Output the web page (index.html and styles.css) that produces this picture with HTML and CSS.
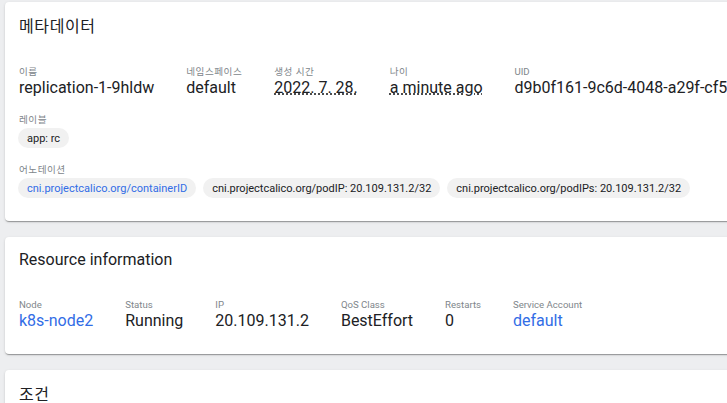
FILE: index.html
```html
<!DOCTYPE html>
<html lang="ko">
<head>
<meta charset="utf-8">
<link rel="stylesheet" href="styles.css">
</head>
<body>
<div class="page">
  <section class="card">
    <h2 class="title title-ko">메타데이터</h2>
    <div class="props">
      <div class="prop"><div class="label label-ko">이름</div><div class="value">replication-1-9hldw</div></div>
      <div class="prop"><div class="label label-ko">네임스페이스</div><div class="value">default</div></div>
      <div class="prop"><div class="label label-ko">생성 시간</div><div class="value dotted">2022. 7. 28.</div></div>
      <div class="prop"><div class="label label-ko">나이</div><div class="value dotted">a minute ago</div></div>
      <div class="prop"><div class="label">UID</div><div class="value">d9b0f161-9c6d-4048-a29f-cf5e2b7a1c3d</div></div>
    </div>
    <div class="group">
      <div class="label label-ko">레이블</div>
      <div class="chips">
        <span class="chip">app: rc</span>
      </div>
    </div>
    <div class="group">
      <div class="label label-ko">어노테이션</div>
      <div class="chips">
        <span class="chip chip-link">cni.projectcalico.org/containerID</span>
        <span class="chip">cni.projectcalico.org/podIP: 20.109.131.2/32</span>
        <span class="chip">cni.projectcalico.org/podIPs: 20.109.131.2/32</span>
      </div>
    </div>
  </section>

  <section class="card">
    <h2 class="title">Resource information</h2>
    <div class="props">
      <div class="prop"><div class="label">Node</div><div class="value link">k8s-node2</div></div>
      <div class="prop"><div class="label">Status</div><div class="value">Running</div></div>
      <div class="prop"><div class="label">IP</div><div class="value">20.109.131.2</div></div>
      <div class="prop"><div class="label">QoS Class</div><div class="value">BestEffort</div></div>
      <div class="prop"><div class="label">Restarts</div><div class="value">0</div></div>
      <div class="prop"><div class="label">Service Account</div><div class="value link">default</div></div>
    </div>
  </section>

  <section class="card">
    <h2 class="title title-ko">조건</h2>
    <div class="props">
      <div class="prop"><div class="label">&nbsp;</div><div class="value">&nbsp;</div></div>
    </div>
  </section>
</div>
</body>
</html>
```

FILE: styles.css
```css
html, body {
  margin: 0;
  padding: 0;
  overflow: hidden;
  background: #edeef0;
}

body {
  font-family: Roboto, "Noto Sans CJK KR", sans-serif;
  color: #202124;
}

.page {
  width: 780px;
  padding: 2px 0 0 5px;
  display: flex;
  flex-direction: column;
  gap: 16px;
}

.card {
  background: #ffffff;
  border-radius: 4px;
  box-shadow: 0 2px 1px -1px rgba(0,0,0,.2), 0 1px 1px 0 rgba(0,0,0,.14), 0 1px 3px 0 rgba(0,0,0,.12);
  padding: 11px 14px 23px;
}

.title {
  margin: 0;
  font-size: 16px;
  line-height: 24px;
  font-weight: 400;
  color: #202124;
}

.title-ko {
  padding-top: 2px;
  letter-spacing: 0.6px;
}

.props {
  display: flex;
  gap: 32px;
  margin-top: 27px;
  white-space: nowrap;
}

.label {
  font-size: 9.6px;
  line-height: 12px;
  color: #80868b;
  white-space: nowrap;
}

.label-ko {
  letter-spacing: 0.5px;
}

.value {
  font-size: 16px;
  line-height: 20px;
  color: #202124;
}

.value.link {
  color: #326de6;
}

.value.dotted {
  text-decoration: underline dotted #202124;
  text-underline-offset: 1px;
}

.group {
  margin-top: 16px;
}

.chips {
  display: flex;
  gap: 7px;
  margin: 2px 0 0 -1px;
  white-space: nowrap;
}

.chip {
  display: inline-flex;
  align-items: center;
  height: 20px;
  padding: 0 9px;
  border-radius: 10px;
  background: #f1f1f1;
  font-size: 11px;
  color: #202124;
}

.chip-link {
  color: #326de6;
}
```
